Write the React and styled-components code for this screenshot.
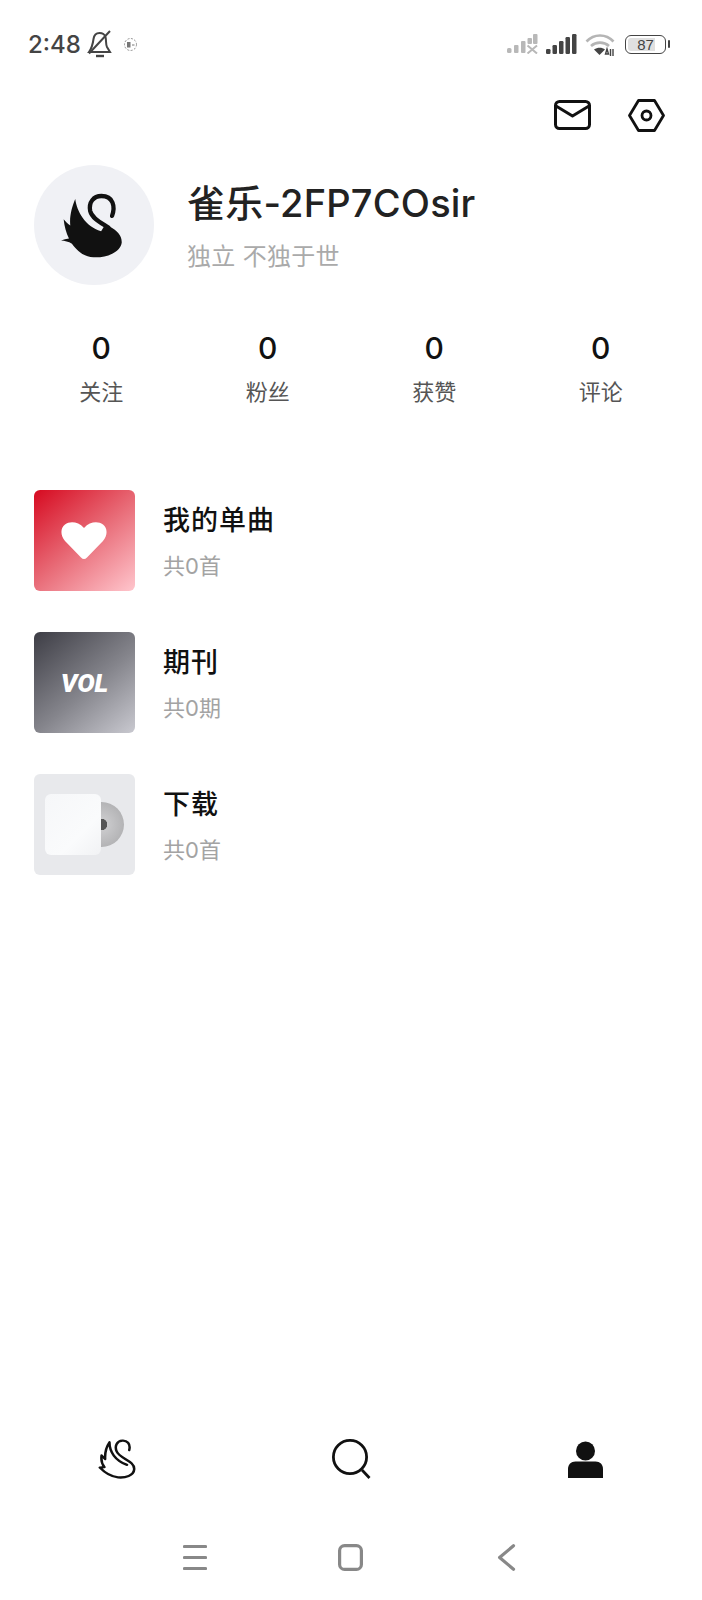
import React from 'react';
import styled, { createGlobalStyle } from 'styled-components';

const GlobalStyle = createGlobalStyle`
    html, body {
        margin: 0;
        padding: 0;
        background: #fff;
    }
    * {
        box-sizing: border-box;
    }
`

const Page = styled.div`
    width: 702px;
    height: 1600px;
    display: flex;
    flex-direction: column;
    overflow: hidden;
    background: #fff;
    font-family: "Inter", "Noto Sans CJK SC", sans-serif;
`

const StatusBar = styled.div`
    height: 88px;
    flex: none;
    display: flex;
    align-items: center;
    justify-content: space-between;
    padding: 0 33px 0 28px;
`

const StatusGroup = styled.div`
    display: flex;
    align-items: center;
    gap: ${props => props.gap || 8}px;
`

const Clock = styled.span`
    font-size: 24px;
    font-weight: 500;
    color: #444;
`

const Battery = styled.div`
    position: relative;
    width: 41px;
    height: 19px;
    border: 1.5px solid #444;
    border-radius: 6px;
    margin-right: 3px;
    display: flex;
    align-items: center;
    justify-content: center;
    font-family: "Liberation Sans", sans-serif;
    font-size: 15px;
    color: #444;
    padding: 2px;
    background: linear-gradient(90deg, #e0e0e0 0, #e0e0e0 29px, #fff 29px);
    background-clip: content-box;

    &::after {
        content: "";
        position: absolute;
        right: -5px;
        top: 4px;
        width: 2.5px;
        height: 8px;
        border-radius: 1px;
        background: #444;
    }
`

const TopActions = styled.div`
    height: 54px;
    flex: none;
    display: flex;
    align-items: center;
    justify-content: flex-end;
    gap: 37px;
    padding-right: 37px;
`

const Profile = styled.div`
    margin-top: 23px;
    padding-left: 34px;
    display: flex;
    align-items: center;
    gap: 33px;
`

const Avatar = styled.div`
    width: 120px;
    height: 120px;
    border-radius: 50%;
    background: #f0f1f5;
    display: flex;
    align-items: center;
    justify-content: center;

    svg {
        margin-right: 5px;
    }
`

const ProfileText = styled.div`
    display: flex;
    flex-direction: column;
    margin-top: 3px;
`

const Name = styled.div`
    font-size: 38px;
    line-height: 46px;
    font-weight: 500;
    letter-spacing: 0.2px;
    color: #222;
`

const Motto = styled.div`
    margin-top: 15px;
    font-size: 24px;
    line-height: 32px;
    letter-spacing: 0.3px;
    color: #aaa;
`

const Stats = styled.div`
    margin-top: 43px;
    padding: 0 18px;
    display: grid;
    grid-template-columns: repeat(4, 1fr);
`

const Stat = styled.div`
    display: flex;
    flex-direction: column;
    align-items: center;
`

const StatValue = styled.div`
    font-size: 30px;
    line-height: 40px;
    font-weight: 500;
    color: #111;
`

const StatLabel = styled.div`
    margin-top: 9px;
    font-size: 22px;
    line-height: 30px;
    color: #555;
`

const List = styled.div`
    margin-top: 83px;
    padding-left: 34px;
    display: flex;
    flex-direction: column;
    gap: 41px;
`

const Row = styled.div`
    display: flex;
    align-items: center;
    gap: 28px;
`

const Thumb = styled.div`
    position: relative;
    width: 101px;
    height: 101px;
    flex: none;
    border-radius: 6px;
    overflow: hidden;
    display: flex;
    align-items: center;
    justify-content: center;
    background: ${props => props.bg};
`

const VolText = styled.span`
    font-family: "Roboto", sans-serif;
    font-size: 26px;
    font-weight: 900;
    font-style: italic;
    color: #fff;
`

const Disc = styled.div`
    position: absolute;
    left: 45px;
    top: 28px;
    width: 45px;
    height: 45px;
    border-radius: 50%;
    background: radial-gradient(circle, #555 0, #555 5.5px, #c9c9cb 6px, #b4b4b6 22px);
`

const Sleeve = styled.div`
    position: absolute;
    left: 11px;
    top: 20px;
    width: 56px;
    height: 61px;
    border-radius: 6px;
    background: linear-gradient(135deg, #f6f7f9 0%, #fafbfc 65%, #f1f2f4 100%);
`

const RowText = styled.div`
    display: flex;
    flex-direction: column;
    margin-top: 2px;
`

const RowTitle = styled.div`
    font-size: 27px;
    line-height: 36px;
    font-weight: 500;
    letter-spacing: 1px;
    color: #111;
`

const RowSub = styled.div`
    margin-top: 12px;
    font-size: 22px;
    line-height: 30px;
    color: #a3a3a3;
`

const Spacer = styled.div`
    flex: 1;
`

const TabBar = styled.div`
    height: 62px;
    flex: none;
    display: grid;
    grid-template-columns: repeat(3, 1fr);
    align-items: center;
    justify-items: center;
`

const NavBar = styled.div`
    height: 110px;
    flex: none;
    padding: 54px 0 0 183px;
    display: flex;
    align-items: flex-start;
    gap: 131px;
`

function SignalBars() {
    const bars = [[0, 15, 5], [6.500, 11, 9], [13, 7, 13], [19.500, 3, 17], [26, 0, 20]];
    return (
        <svg width="31" height="20" viewBox="0 0 31 20">
            {bars.map(([x, y, h]) => (
                <rect key={x} x={x} y={y} width="4.500" height={h} rx="1.200" fill="#444" />
            ))}
        </svg>
    );
}

function SignalOff() {
    const color = '#b8b8b8';
    return (
        <svg width="31" height="20" viewBox="0 0 31 20">
            <rect x="0" y="14" width="4.500" height="5" rx="1.500" fill={color} />
            <rect x="7" y="11" width="4.500" height="8" rx="1" fill={color} />
            <rect x="14" y="7" width="4.500" height="12" rx="1" fill={color} />
            <rect x="20.500" y="4" width="4.500" height="6" rx="1" fill={color} />
            <rect x="26" y="0" width="4.500" height="10" rx="1" fill={color} />
            <path d="M20.500 11.500l9.500 8M30 11.500l-9.500 8" stroke={color} strokeWidth="2" />
        </svg>
    );
}

function App() {
    return (
        <Page>
            <GlobalStyle />
            <StatusBar>
                <StatusGroup gap={6}>
                    <Clock>2:48</Clock>
                    <svg width="26" height="28" viewBox="0 0 26 28" fill="none" stroke="#444" strokeWidth="2">
                        <path d="M2 22h21l-3-5c-1.500-3-.5-6-1.500-10-.8-2.500-3-4-6-4-3.500 0-5.500 2.500-6 6-.5 4-1 8-4.500 13z" />
                        <path d="M2 23.500L23 1" />
                        <path d="M9 26h8" strokeWidth="2.400" />
                    </svg>
                    <svg style={{ marginLeft: 4 }} width="15" height="15" viewBox="0 0 15 15" fill="none">
                        <circle cx="7.500" cy="7.500" r="6" stroke="#777" strokeWidth="0.800" strokeDasharray="2 1.500" />
                        <rect x="4" y="5" width="3.500" height="5.500" fill="#777" />
                        <path d="M9 8h2.500" stroke="#777" />
                    </svg>
                </StatusGroup>
                <StatusGroup gap={8}>
                    <SignalOff />
                    <SignalBars />
                    <svg style={{ marginRight: 1 }} width="31" height="23" viewBox="0 0 31 23" fill="none">
                        <path d="M1.500 8.500C9 .5 21 .5 28.500 8.500" stroke="#b5b5b5" strokeWidth="2.600" />
                        <path d="M6 13c5-4.500 13-4.500 18 0" stroke="#b5b5b5" strokeWidth="2.600" />
                        <path d="M9 16.500c3.500-2.500 8-2.500 11 0l-5.500 5.500z" fill="#444" />
                        <path d="M22 16l-1.500 5h3zM25.500 16v7M28 16v7" stroke="#444" strokeWidth="1.400" />
                    </svg>
                    <Battery>87</Battery>
                </StatusGroup>
            </StatusBar>

            <TopActions>
                <svg width="37" height="30" viewBox="0 0 37 30" fill="none" stroke="#111" strokeWidth="3" strokeLinejoin="round">
                    <rect x="1.500" y="1.500" width="34" height="27" rx="4" />
                    <path d="M2 6l16.500 10L35 6" />
                </svg>
                <svg width="37" height="33" viewBox="0 0 37 33" fill="none" stroke="#111" strokeWidth="2.800" strokeLinejoin="round">
                    <path d="M10.500 1.500h16L35.500 16.500l-9 15h-16l-9-15z" />
                    <circle cx="18.500" cy="16.500" r="4.500" />
                </svg>
            </TopActions>

            <Profile>
                <Avatar>
                    <svg width="61" height="65" viewBox="92 95 184 194">
                        <path d="M246 163C256 135 250 103 214 103C190 103 175 122 180 148C186 172 215 185 235 198" fill="none" stroke="#111" strokeWidth="13" strokeLinecap="round" />
                        <path d="M135 112C125 135 117 165 120 192C113 187 106 180 100 173C102 195 108 215 116 231C108 233 100 234 92 237C103 238 115 240 125 247C140 268 160 286 190 288C235 290 272 270 275 245C277 225 262 207 240 196L225 190L213 209C165 195 140 150 135 112Z" fill="#111" />
                    </svg>
                </Avatar>
                <ProfileText>
                    <Name>雀乐-2FP7COsir</Name>
                    <Motto>独立 不独于世</Motto>
                </ProfileText>
            </Profile>

            <Stats>
                {['关注', '粉丝', '获赞', '评论'].map(label => (
                    <Stat key={label}>
                        <StatValue>0</StatValue>
                        <StatLabel>{label}</StatLabel>
                    </Stat>
                ))}
            </Stats>

            <List>
                <Row>
                    <Thumb bg="linear-gradient(140deg, #d60a20 0%, #e86a76 50%, #ffc6cd 100%)">
                        <svg style={{ marginRight: 1 }} width="46" height="38" viewBox="0 0 46 38">
                            <path d="M23 37c-1 0-2-.5-3-1.500L4 19C-1 13-.5 6 4 2.500 9-1 17-.5 23 6c6-6.500 14-7 19-3.500 4.500 3.500 5 10.500 0 16.500L26 35.500c-1 1-2 1.500-3 1.500z" fill="#fff" />
                        </svg>
                    </Thumb>
                    <RowText>
                        <RowTitle>我的单曲</RowTitle>
                        <RowSub>共0首</RowSub>
                    </RowText>
                </Row>
                <Row>
                    <Thumb bg="linear-gradient(140deg, #3d3d45 0%, #85858c 55%, #c9c9d0 100%)">
                        <VolText>VOL</VolText>
                    </Thumb>
                    <RowText>
                        <RowTitle>期刊</RowTitle>
                        <RowSub>共0期</RowSub>
                    </RowText>
                </Row>
                <Row>
                    <Thumb bg="#e8e9ec">
                        <Disc />
                        <Sleeve />
                    </Thumb>
                    <RowText>
                        <RowTitle>下载</RowTitle>
                        <RowSub>共0首</RowSub>
                    </RowText>
                </Row>
            </List>

            <Spacer />

            <TabBar>
                <svg width="38" height="40" viewBox="102 86 106 122" preserveAspectRatio="none" fill="none" stroke="#111" strokeWidth="7" strokeLinejoin="round" strokeLinecap="round">
                    <path d="M189 120C194 100 182 90 170 91C154 92 148 108 154 124C162 146 204 152 203 178C202 198 178 205 158 203C138 201 122 190 107 173C112 172 116 172 120 172C113 162 110 150 112 136C115 140 118 144 122 147C121 128 125 110 134 96C134 125 150 152 183 165" />
                </svg>
                <svg width="39" height="40" viewBox="0 0 39 40" fill="none" stroke="#111" strokeWidth="2.800">
                    <circle cx="18" cy="18" r="16.600" />
                    <path d="M30 31l7.500 8" />
                </svg>
                <svg width="35" height="37" viewBox="0 0 35 37" fill="#111">
                    <circle cx="17.500" cy="10" r="9.500" />
                    <path d="M0 37V28c0-4.500 3-7.500 7.500-7.500h20c4.500 0 7.500 3 7.500 7.500v9z" />
                </svg>
            </TabBar>

            <NavBar>
                <svg width="24" height="27" viewBox="0 0 24 27" fill="none" stroke="#888" strokeWidth="3.200" strokeLinecap="round">
                    <path d="M1.500 2.500h21M1.500 13.500h21M1.500 24.500h21" />
                </svg>
                <svg width="25" height="27" viewBox="0 0 25 27" fill="none" stroke="#888" strokeWidth="3.200">
                    <rect x="1.600" y="1.600" width="21.800" height="23.800" rx="5" />
                </svg>
                <svg width="26" height="27" viewBox="0 0 26 27" fill="none" stroke="#888" strokeWidth="3.200" strokeLinecap="round" strokeLinejoin="round">
                    <path d="M19.500 1.800L5.600 13.500l13.900 11.700" />
                </svg>
            </NavBar>
        </Page>
    );
}

export default App;
